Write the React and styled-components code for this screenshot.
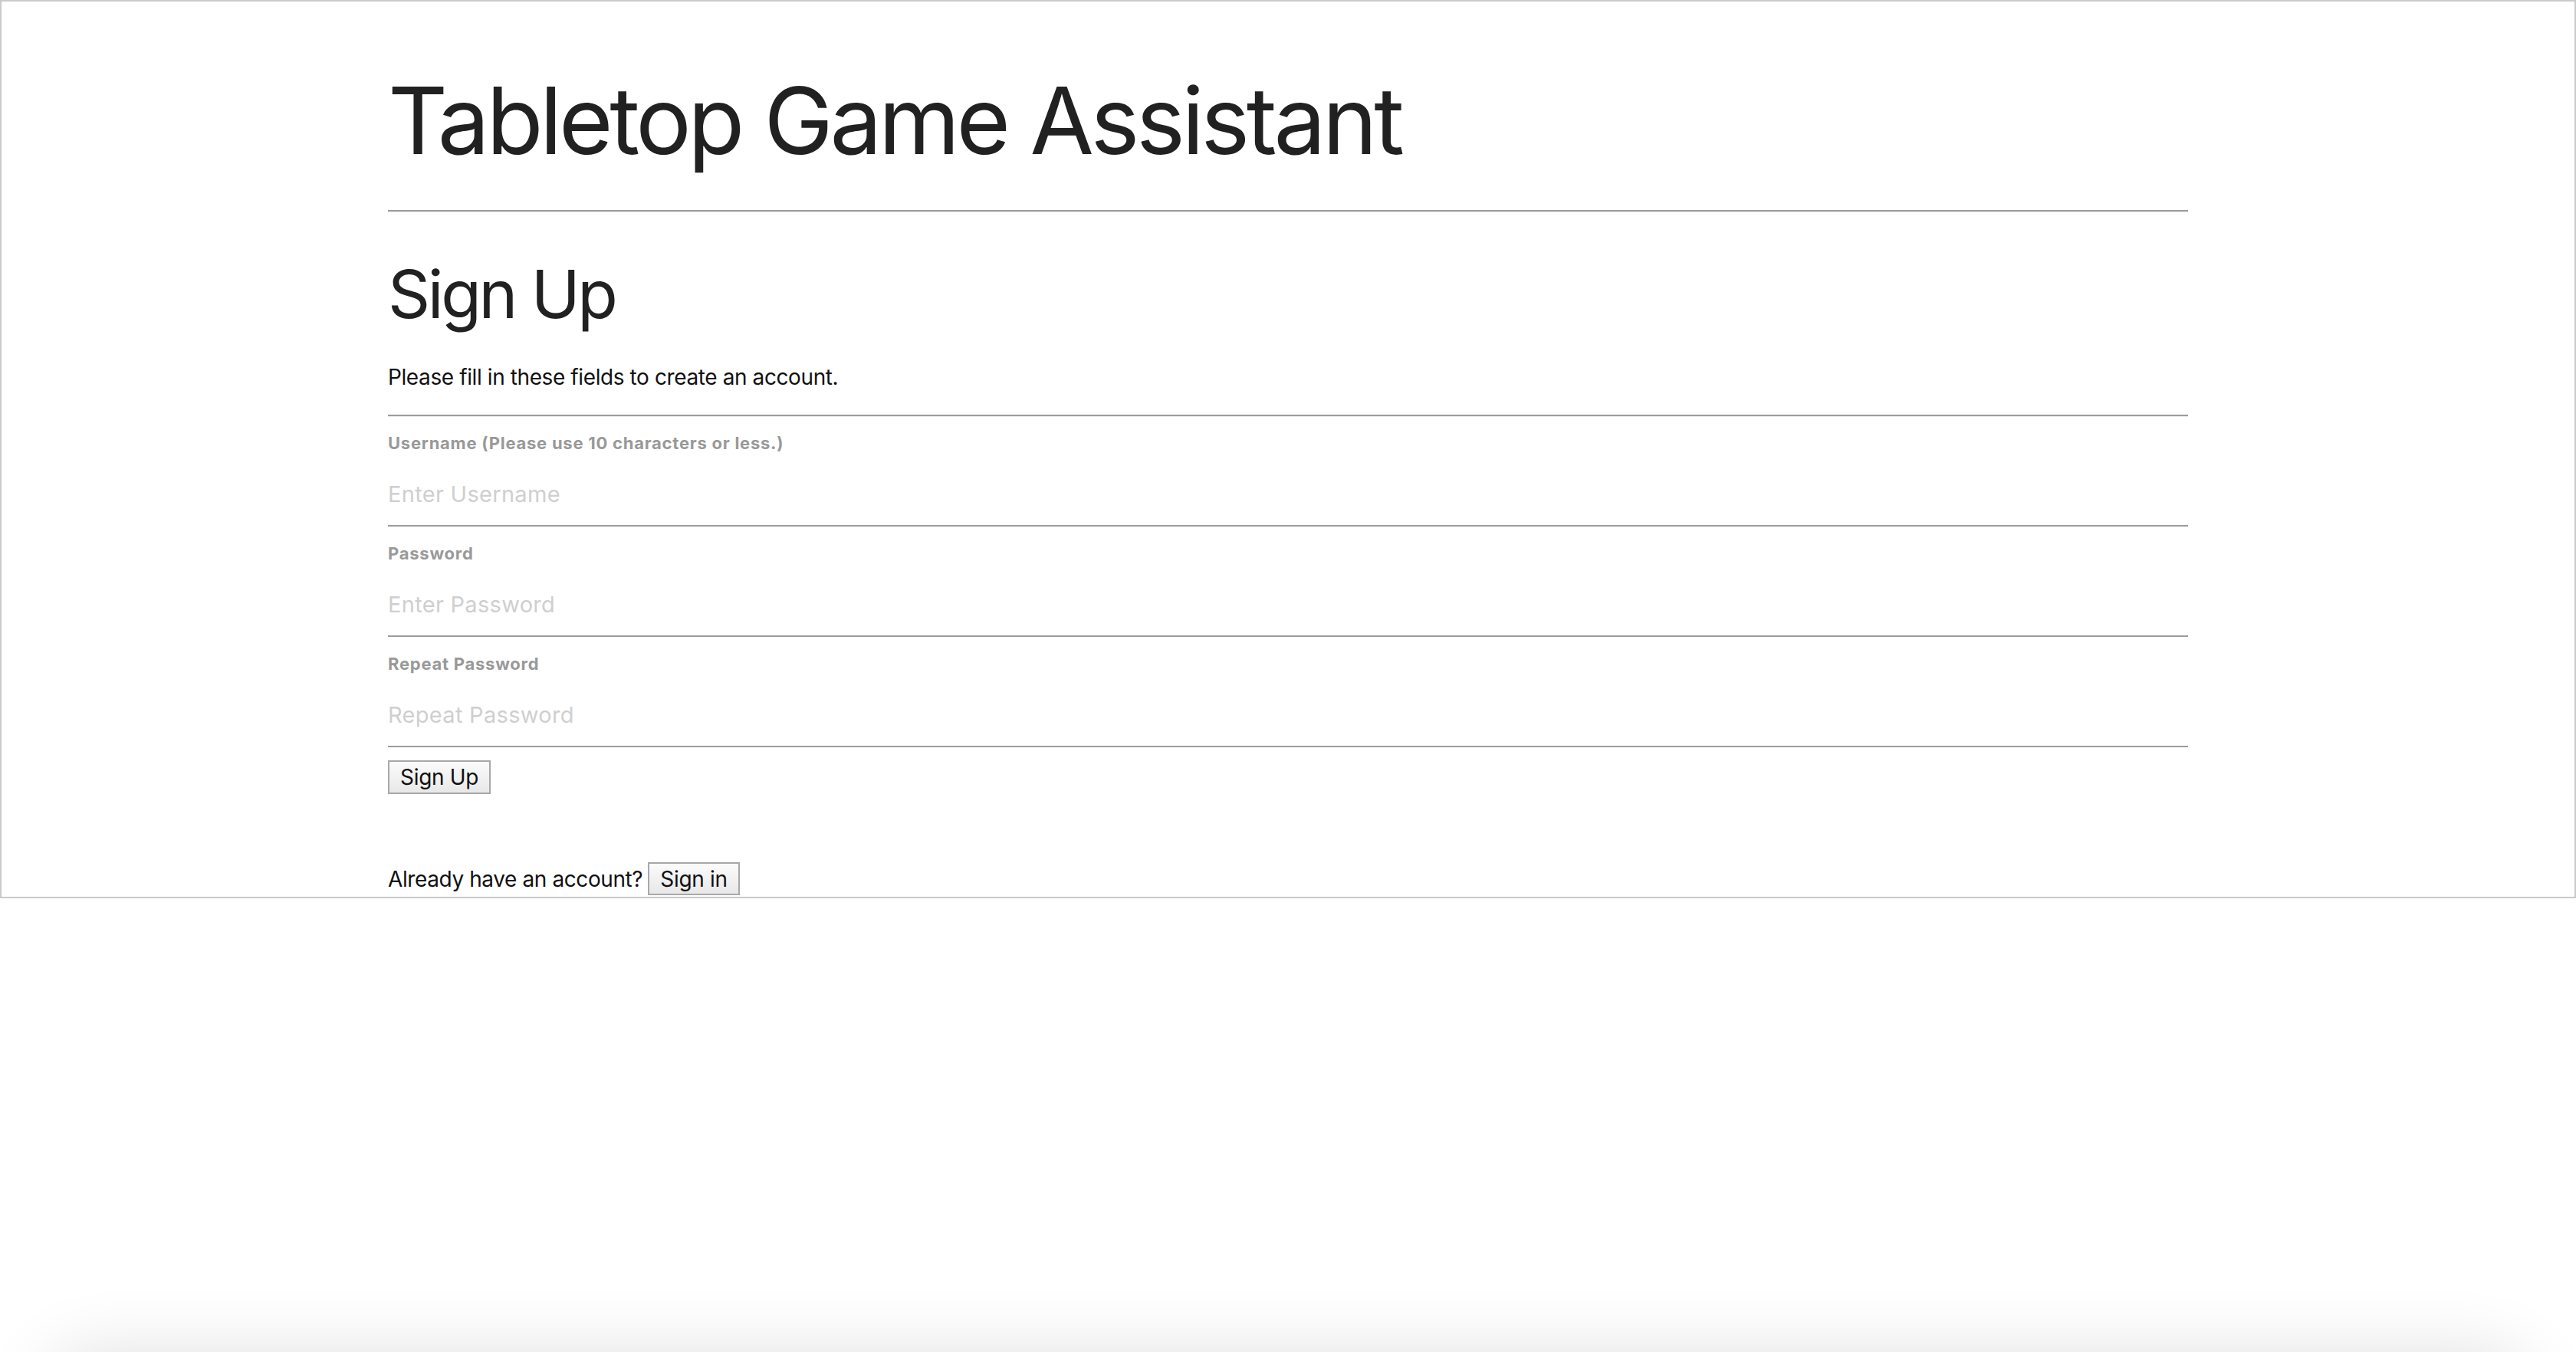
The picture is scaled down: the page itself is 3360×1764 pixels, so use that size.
import React from 'react'
import styled, { createGlobalStyle } from 'styled-components'

const GlobalStyle = createGlobalStyle`
  html, body {
    margin: 0;
    padding: 0;
    background: #ffffff;
    font-family: Inter, "Noto Sans", sans-serif;
    color: #212121;
  }
  * {
    box-sizing: border-box;
  }
`

const Frame = styled.div`
  height: 1172px;
  border: 2px solid #cacaca;
`

const Container = styled.div`
  width: 2348px;
  margin: 0 auto;
`

const Title = styled.h1`
  margin: 85px 0 0;
  font-size: 121px;
  line-height: 140px;
  font-weight: 400;
  letter-spacing: -4.4px;
  color: #212121;
`

const Rule = styled.hr`
  margin: ${(p) => p.$top}px 0 0;
  height: 0;
  border: 0;
  border-top: 2px solid #9c9c9c;
  border-bottom: 1px solid #ededed;
`

const Heading = styled.h2`
  margin: 57px 0 0;
  font-size: 86px;
  line-height: 100px;
  font-weight: 400;
  letter-spacing: -3.4px;
  color: #212121;
`

const Intro = styled.p`
  margin: 40px 0 0;
  font-size: 28px;
  line-height: 36px;
  color: #111;
  letter-spacing: -0.4px;
`

const Form = styled.form`
  display: flex;
  flex-direction: column;
`

const Label = styled.label`
  display: block;
  margin-top: ${(p) => p.$top}px;
  font-size: 22px;
  line-height: 24px;
  font-weight: 700;
  color: #999;
  letter-spacing: 0.75px;
`

const Input = styled.input`
  display: block;
  width: 100%;
  height: 97px;
  padding: 36px 0 23px;
  margin: 0;
  border: 0;
  border-bottom: 2px solid #9c9c9c;
  outline: none;
  background: transparent;
  font-family: Inter, "Noto Sans", sans-serif;
  font-size: 29px;
  line-height: 36px;
  color: #212121;
  letter-spacing: 0.3px;
  &::placeholder {
    color: #cfcfcf;
  }
`

const Button = styled.button`
  height: ${(p) => p.$height}px;
  padding: 0 14px;
  border: 2px solid #a8a8a8;
  border-radius: 0;
  background: linear-gradient(#fbfbfb, #e8e8e8);
  font-family: Inter, "Noto Sans", sans-serif;
  font-size: 28px;
  line-height: 36px;
  color: #111;
  letter-spacing: -0.3px;
`

const SubmitRow = styled.div`
  margin-top: 17px;
`

const SignInRow = styled.div`
  display: flex;
  align-items: center;
  gap: 7px;
  margin-top: 89px;
  font-size: 28px;
  line-height: 36px;
  color: #111;
  letter-spacing: -0.4px;
`

const BottomShade = styled.div`
  position: fixed;
  left: 60px;
  right: 60px;
  top: 100vh;
  height: 200px;
  border-radius: 60px;
  box-shadow: 0 0 90px rgba(0, 0, 0, 0.12);
  pointer-events: none;
`

const App = () => {
  return (
    <>
      <GlobalStyle />
      <Frame>
        <Container>
          <Title>Tabletop Game Assistant</Title>
          <Rule $top={47} />
          <Heading>Sign Up</Heading>
          <Intro>Please fill in these fields to create an account.</Intro>
          <Rule $top={31} />
          <Form onSubmit={(e) => e.preventDefault()}>
            <Label $top={22} htmlFor="username">
              Username (Please use 10 characters or less.)
            </Label>
            <Input id="username" type="text" placeholder="Enter Username" />
            <Label $top={23} htmlFor="password">
              Password
            </Label>
            <Input id="password" type="password" placeholder="Enter Password" />
            <Label $top={23} htmlFor="repeat">
              Repeat Password
            </Label>
            <Input id="repeat" type="password" placeholder="Repeat Password" />
            <SubmitRow>
              <Button type="submit" $height={44}>
                Sign Up
              </Button>
            </SubmitRow>
          </Form>
          <SignInRow>
            Already have an account?
            <Button type="button" $height={43}>
              Sign in
            </Button>
          </SignInRow>
        </Container>
      </Frame>
      <BottomShade />
    </>
  )
}

export default App
